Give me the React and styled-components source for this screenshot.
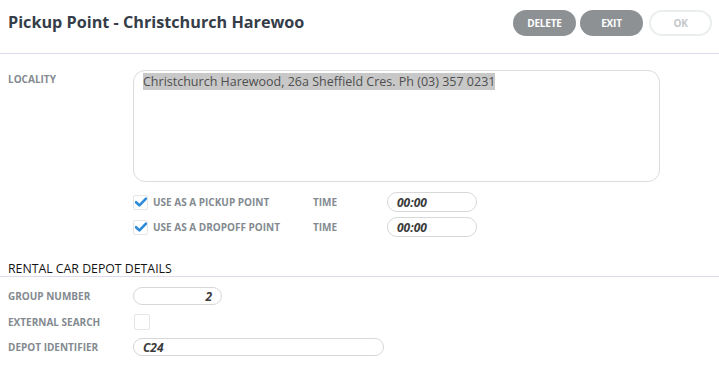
import React from "react";
import styled, { createGlobalStyle } from "styled-components";

const Global = createGlobalStyle`
  html, body { margin: 0; padding: 0; background: #fff; }
  body { font-family: "Open Sans", "Noto Sans", sans-serif; }
  * { box-sizing: border-box; }
`;

const Page = styled.div`
  width: 719px;
  height: 369px;
  overflow: hidden;
  background: #fff;
`;

const Header = styled.div`
  height: 54px;
  display: flex;
  align-items: flex-start;
  justify-content: space-between;
  padding: 10px 7px 0 8px;
  border-bottom: 1px solid #dedaee;
`;

const Title = styled.h1`
  margin: -1px 0 0 0;
  font-size: 16.2px;
  font-weight: 700;
  color: #353d49;
  line-height: 26px;
`;

const Buttons = styled.div`
  display: flex;
  gap: 4px;
`;

const Btn = styled.button`
  width: ${(p) => p.$w || 62}px;
  height: 26px;
  border-radius: 13px;
  font-family: "Open Sans", sans-serif;
  font-size: 10px;
  font-weight: 700;
  letter-spacing: -0.2px;
  border: ${(p) => (p.$ghost ? "2px solid #eaeeec" : "none")};
  background: ${(p) => (p.$ghost ? "#fff" : "#8d9194")};
  color: ${(p) => (p.$ghost ? "#c4c7c9" : "#fff")};
  padding: 0;
  margin-left: ${(p) => p.$ml || 0}px;
`;

const Body = styled.div`
  padding: 16px 0 0 0;
`;

const Row = styled.div`
  display: flex;
  align-items: ${(p) => p.$align || "center"};
  padding-left: 8px;
  margin-bottom: ${(p) => p.$mb || 0}px;
`;

const Label = styled.div`
  width: 125px;
  flex: none;
  font-size: 10px;
  font-weight: 700;
  color: #838a90;
  text-transform: uppercase;
  line-height: 14px;
  padding-top: ${(p) => p.$pt || 0}px;
`;

const TextArea = styled.div`
  width: 527px;
  height: 112px;
  border: 1px solid #dcdcdc;
  border-radius: 12px;
  padding: 2px 9px;
  font-size: 12.5px;
  color: #4f4f4f;
  line-height: 17px;
`;

const Selected = styled.span`
  background: #c8c8c8;
`;

const OptionRow = styled.div`
  display: flex;
  align-items: center;
  padding-left: 133px;
  height: 20px;
  margin-bottom: ${(p) => p.$mb || 0}px;
`;

const Check = styled.div`
  width: ${(p) => p.$size || 15}px;
  height: ${(p) => p.$size || 15}px;
  border: 1px solid #e6e6e6;
  border-radius: 2px;
  display: flex;
  align-items: center;
  justify-content: center;
  flex: none;
  margin-left: ${(p) => p.$ml || 0}px;
`;

const OptLabel = styled.div`
  font-size: 10px;
  font-weight: 700;
  color: #838a90;
  width: ${(p) => p.$w}px;
  padding-left: ${(p) => p.$pl || 0}px;
  flex: none;
`;

const Input = styled.div`
  width: ${(p) => p.$w}px;
  height: ${(p) => p.$h || 18}px;
  border: 1px solid #d8d8d8;
  border-radius: 10px;
  font-size: 12px;
  font-style: italic;
  font-weight: 700;
  color: #3a3a3a;
  display: flex;
  align-items: center;
  justify-content: ${(p) => (p.$right ? "flex-end" : "flex-start")};
  padding: ${(p) => (p.$right ? "0 9px 0 0" : "0 0 0 9px")};
  flex: none;
`;

const Section = styled.div`
  margin-top: 25px;
  padding: 0 0 0 8px;
  border-bottom: 1px solid #dedaee;
  font-size: 12.3px;
  font-weight: 500;
  color: #141414;
  line-height: 14px;
  margin-bottom: 10px;
`;

const Tick = () => (
  <svg width="12" height="10" viewBox="0 0 12 10">
    <path d="M1 5.2 L4.4 8.4 L11 1.6" fill="none" stroke="#2c8ad9" strokeWidth="2.6" strokeLinecap="round" strokeLinejoin="round" />
  </svg>
);

export default function App() {
  return (
    <Page>
      <Global />
      <Header>
        <Title>Pickup Point - Christchurch Harewoo</Title>
        <Buttons>
          <Btn $w={63}>DELETE</Btn>
          <Btn $w={63}>EXIT</Btn>
          <Btn $w={63} $ghost $ml={2}>OK</Btn>
        </Buttons>
      </Header>
      <Body>
        <Row $align="flex-start" $mb={10}>
          <Label $pt={2}>Locality</Label>
          <TextArea>
            <Selected>Christchurch Harewood, 26a Sheffield Cres. Ph (03) 357 0231</Selected>
          </TextArea>
        </Row>
        <OptionRow $mb={5}>
          <Check><Tick /></Check>
          <OptLabel $w={165} $pl={5}>USE AS A PICKUP POINT</OptLabel>
          <OptLabel $w={74}>TIME</OptLabel>
          <Input $w={90} $h={20}>00:00</Input>
        </OptionRow>
        <OptionRow>
          <Check><Tick /></Check>
          <OptLabel $w={165} $pl={5}>USE AS A DROPOFF POINT</OptLabel>
          <OptLabel $w={74}>TIME</OptLabel>
          <Input $w={90} $h={20}>00:00</Input>
        </OptionRow>
        <Section>RENTAL CAR DEPOT DETAILS</Section>
        <Row $mb={9}>
          <Label>Group Number</Label>
          <Input $w={89} $right>2</Input>
        </Row>
        <Row $mb={8}>
          <Label>External Search</Label>
          <Check $size={16} $ml={1} />
        </Row>
        <Row>
          <Label>Depot Identifier</Label>
          <Input $w={251}>C24</Input>
        </Row>
      </Body>
    </Page>
  );
}
